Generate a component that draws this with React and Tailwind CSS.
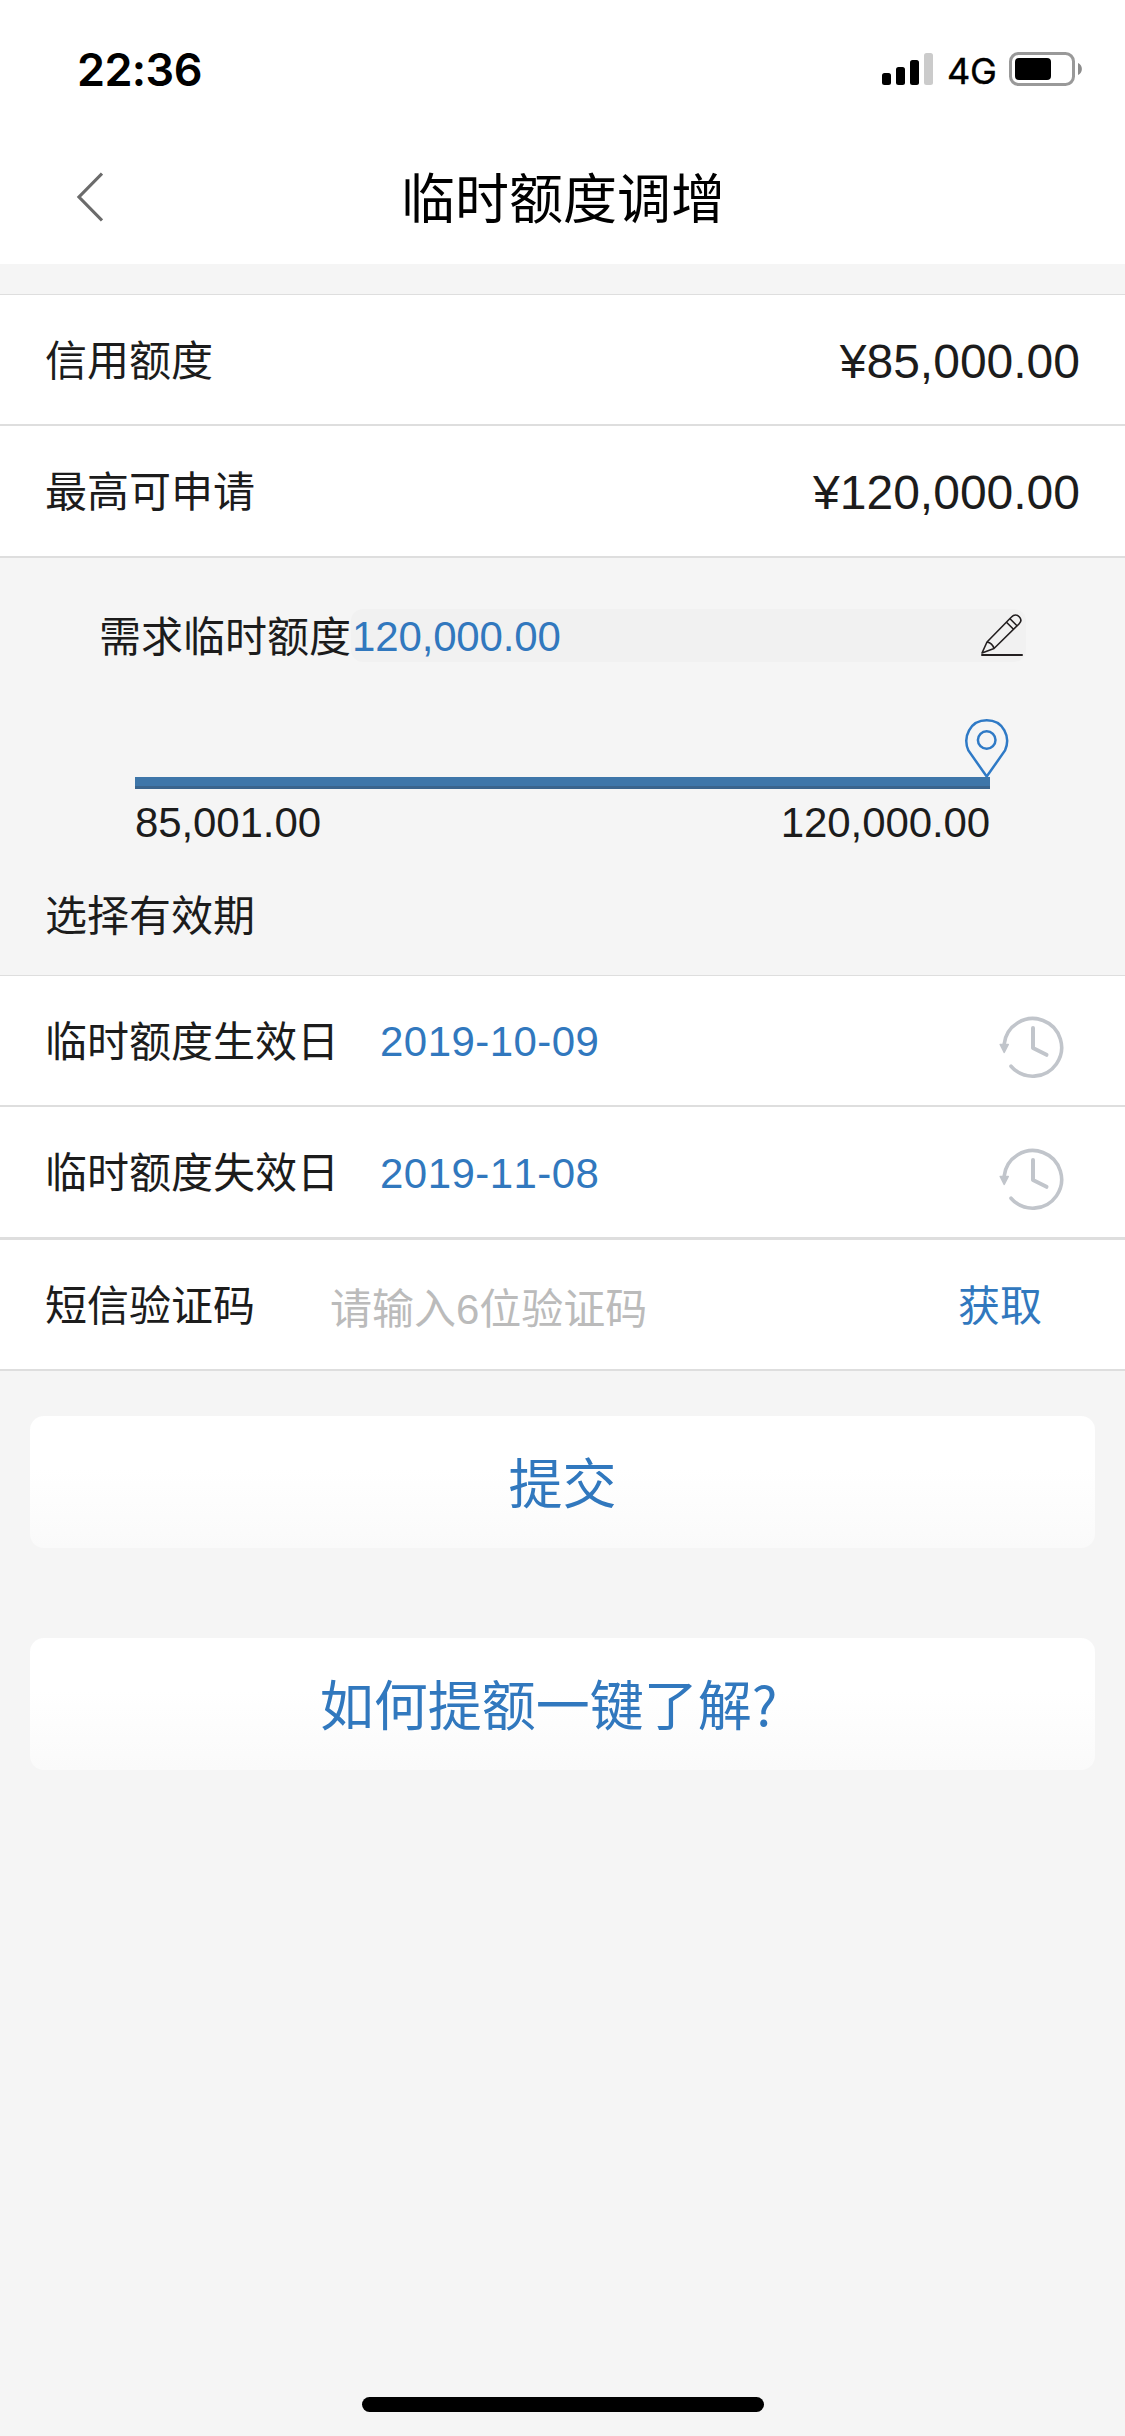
const cjk = "font-['Liberation_Sans','Noto_Sans_CJK_SC',sans-serif]";

function StatusBar() {
  return (
    <div className="flex h-[132px] items-start pl-[77px] pr-[42px]">
      <div className="mt-[47px] font-['Inter',sans-serif] text-[45px] font-semibold leading-[46px] tracking-[-0.6px] text-black">22:36</div>
      <div className="ml-auto mt-[52px] flex h-[34px] items-center">
        <div className="flex h-[32px] items-end gap-[5px]">
          <div className="h-[12px] w-[9px] rounded-[2.5px] bg-black" />
          <div className="h-[18px] w-[9px] rounded-[2.5px] bg-black" />
          <div className="h-[25px] w-[9px] rounded-[2.5px] bg-black" />
          <div className="h-[32px] w-[9px] rounded-[2.5px] bg-[#cbcbcb]" />
        </div>
        <div className="ml-[14px] mt-[3px] w-[62px] font-['Inter',sans-serif] text-[36px] font-normal leading-[34px] tracking-[-0.3px] text-black [-webkit-text-stroke:0.4px_#000]">4G</div>
        <svg width="74" height="34" viewBox="0 0 74 34">
          <rect x="1.5" y="1.5" width="63" height="31" rx="8" fill="none" stroke="#999" strokeWidth="3" />
          <rect x="6" y="6" width="36" height="22" rx="4" fill="#000" />
          <path d="M69 11c5.200 2 5.200 10 0 12z" fill="#8c8c8c" />
        </svg>
      </div>
    </div>
  );
}

function PencilIcon() {
  return (
    <svg className="mt-[4px] block" width="44" height="44" viewBox="0 0 44 44" fill="none" stroke="#231f20" strokeWidth="1.600" strokeLinejoin="round">
      <path d="M2 40L7 29L29.500 6L31.500 4C34 1.200 37 1.500 39.200 3.700S41.500 8.500 39 11L14 35.500ZM7 29C10 29.500 13 32 14 35.500M26.500 9.200L33.500 16.200M30 5.700L37 12.700" />
      <path d="M2 42H42" strokeWidth="2" strokeLinecap="round" />
    </svg>
  );
}

function ClockIcon() {
  return (
    <svg className="block" width="66" height="64" viewBox="0 0 66 64" fill="none" stroke="#c1c5cb" strokeWidth="3.600" strokeLinecap="round">
      <path d="M5.200 28A28.800 28.800 0 1 1 12 50.200" />
      <path d="M34 12V32L47.500 38.800" strokeWidth="4" strokeLinejoin="round" />
      <path d="M1.200 28.500H9.300L5.200 36.500Z" fill="#c1c5cb" strokeWidth="1.500" strokeLinejoin="round" />
    </svg>
  );
}

function Row({ label, children, className }) {
  return (
    <div className={`flex items-center bg-white pl-[45px] ${className}`}>
      <div className="mt-[4px] leading-[60px]">{label}</div>
      {children}
    </div>
  );
}

export default function App() {
  return (
    <div className={`flex h-[2436px] w-[1125px] flex-col bg-[#f5f5f5] text-[42px] text-[#1c1c1c] [font-kerning:none] ${cjk}`}>
      <header className="h-[264px] bg-white">
        <StatusBar />
        <div className="flex h-[130px] items-center pl-[75px]">
          <svg width="28" height="50" viewBox="0 0 28 50" fill="none" stroke="#6b6b6b" strokeWidth="3.200">
            <path d="M27 1.500L4 25L27 48.500" />
          </svg>
          <h1 className="ml-[298px] mt-[5px] text-[54px] leading-[80px] text-black">临时额度调增</h1>
        </div>
      </header>

      <section className="mt-[30px] border-t border-[#dedede]">
        <Row label="信用额度" className="h-[131px] border-b-2 border-[#dedede]">
          <div className="ml-auto pr-[45px] pt-[4px] text-[48px] leading-[60px]">¥85,000.00</div>
        </Row>
        <Row label="最高可申请" className="h-[132px] border-b-2 border-[#dedede]">
          <div className="ml-auto pr-[45px] pt-[4px] text-[48px] leading-[60px]">¥120,000.00</div>
        </Row>
      </section>

      <section className="flex h-[417px] flex-col">
        <div className="mt-[51px] flex h-[53px] items-center pl-[99px]">
          <div className="mt-[4px] w-[252px] leading-[53px]">需求临时额度</div>
          <div className="flex h-[53px] w-[675px] items-start justify-between rounded-[12px] bg-[#f1f1f1] pl-[1px] pr-[2px] text-[#3178be]">
            <span className="mt-px leading-[53px] tracking-[-0.15px]">120,000.00</span>
            <PencilIcon />
          </div>
        </div>
        <div className="ml-[135px] mt-[56px] flex w-[875px] flex-col">
          <svg className="ml-auto block" width="46" height="59" viewBox="0 0 46 59" fill="none" stroke="#2f7ac6" strokeWidth="2.500">
            <path d="M22.700 58.500L4.400 32.500C-1.500 19 6 2.300 22.700 2.300S47 19 41 32.500Z" />
            <circle cx="22.700" cy="22" r="8.800" />
          </svg>
          <div className="h-[12px] w-[855px] border-b-[3px] border-[#3a648d] bg-[#3e76a9]" />
          <div className="mt-[9px] flex w-[855px] justify-between leading-[50px] tracking-[-0.1px]">
            <span>85,001.00</span>
            <span>120,000.00</span>
          </div>
        </div>
        <div className="ml-[45px] mt-auto mb-[28px] leading-[60px]">选择有效期</div>
      </section>

      <section className="border-t border-[#dedede]">
        <Row label="临时额度生效日" className="h-[131px] border-b-2 border-[#dedede]">
          <div className="ml-[41px] mt-[2px] tracking-[0.45px] text-[#3178be]">2019-10-09</div>
          <div className="ml-auto mr-[60px] mt-[15px]"><ClockIcon /></div>
        </Row>
        <Row label="临时额度失效日" className="h-[133px] border-b-[3px] border-[#dedede]">
          <div className="ml-[41px] mt-[2px] tracking-[0.45px] text-[#3178be]">2019-11-08</div>
          <div className="ml-auto mr-[60px] mt-[15px]"><ClockIcon /></div>
        </Row>
        <Row label="短信验证码" className="h-[131px] border-b-2 border-[#dedede]">
          <div className="ml-[75px] mt-[9px] text-[#bbbbbb]">请输入6位验证码</div>
          <div className="ml-auto mr-[83px] mt-[4px] text-[#3178be]">获取</div>
        </Row>
      </section>

      <div className="mx-[30px] mt-[45px] flex flex-col gap-[90px] text-[54px] text-[#3178be]">
        <button className="h-[132px] rounded-[14px] bg-linear-to-b from-white from-40% to-[#fafafa] pt-[6px]">提交</button>
        <button className="h-[132px] rounded-[14px] bg-linear-to-b from-white from-40% to-[#fafafa] pr-[28px] pt-[6px]">
          如何提额一键了解<span className="font-['Noto_Sans_CJK_SC',sans-serif] leading-none">?</span>
        </button>
      </div>

      <div className="mx-auto mb-[24px] mt-auto h-[15px] w-[402px] rounded-full bg-black" />
    </div>
  );
}
